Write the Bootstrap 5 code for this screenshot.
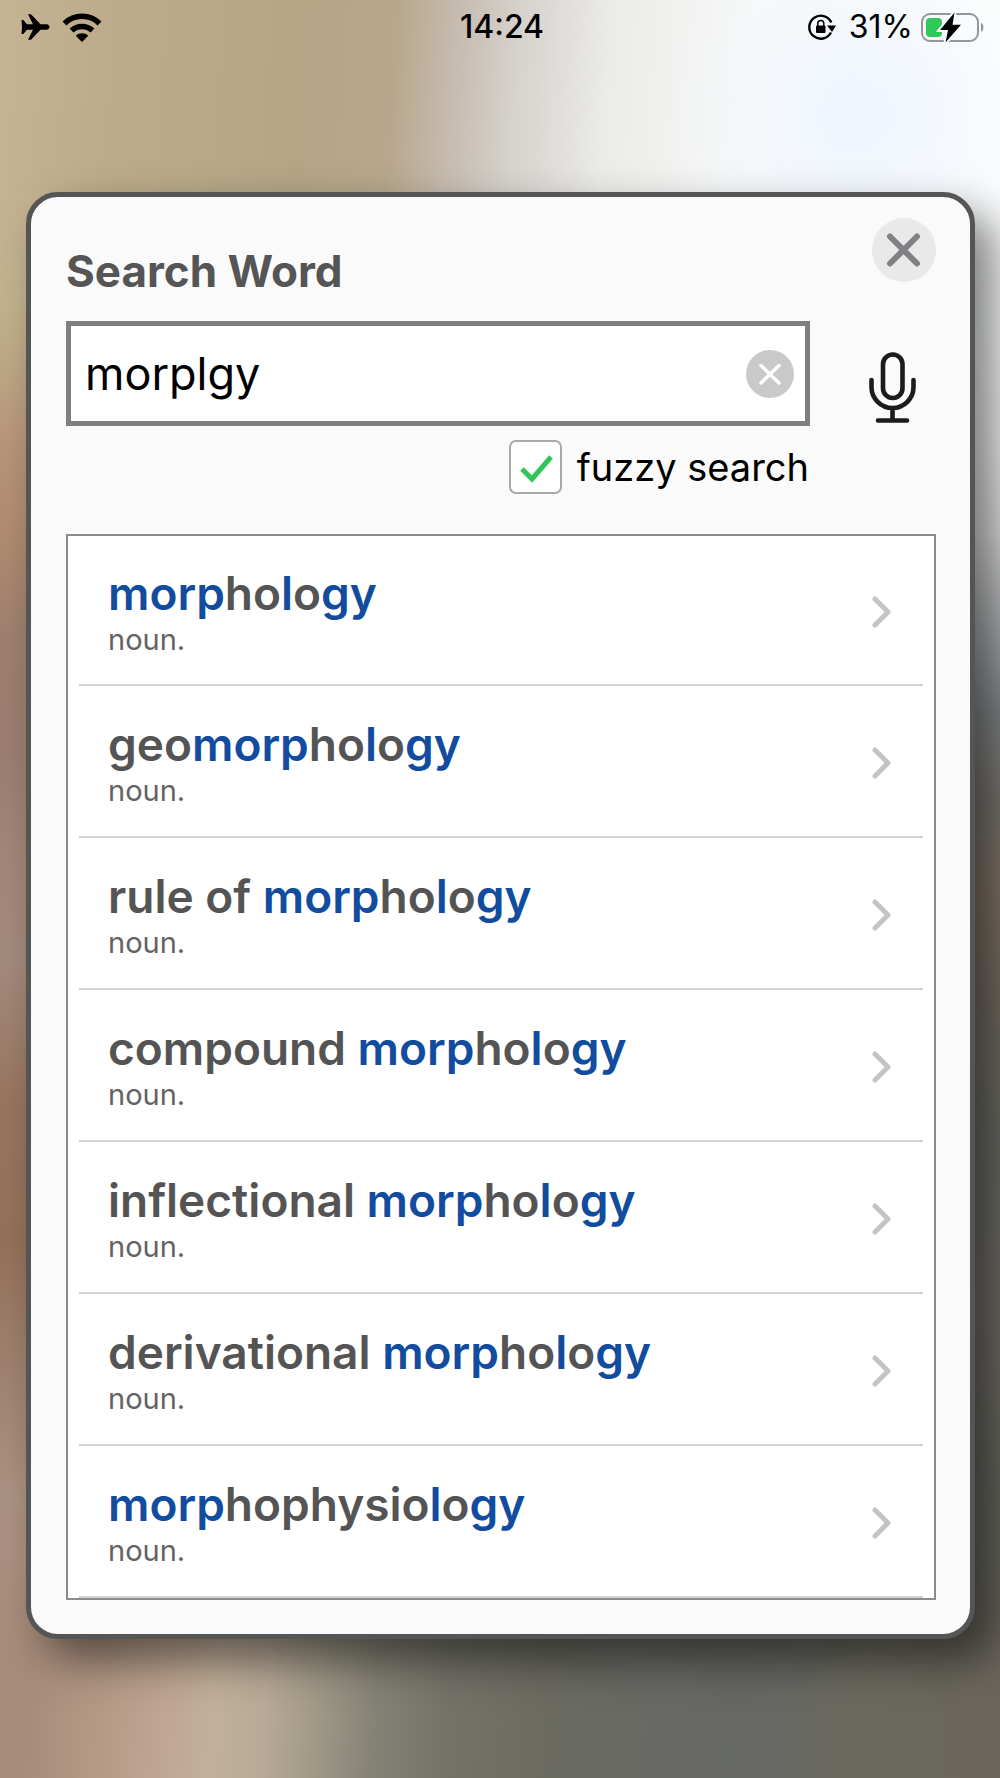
<!DOCTYPE html>
<html lang="en">
<head>
<meta charset="utf-8">
<meta name="viewport" content="width=device-width, initial-scale=1">
<title>Search Word</title>
<link rel="stylesheet" href="https://cdn.jsdelivr.net/npm/bootstrap@5.3.0/dist/css/bootstrap.min.css">
<style>
  body {
    font-family: Inter, "Liberation Sans", sans-serif;
    color: #000;
    position: relative;
    min-height: 100vh;
    isolation: isolate;
    /* left and right halves of the soft wallpaper */
    background:
      linear-gradient(180deg, #c4b393 0%, #c3b48f 17%, #bda685 21%, #b8957c 25%, #b08c70 30%, #9f8070 36%, #9c7e70 42%, #a38778 48%, #a58b7e 54%, #98765f 62%, #94725a 70%, #a08270 77%, #ac9282 84%, #ab9080 92%, #a38674 100%) 0 0 / 50% 100% no-repeat,
      linear-gradient(180deg, #fdfefe 0%, #fbfcfd 19%, #f6f6f6 25%, #e4e5e5 30%, #b4b6b8 35%, #888b8d 40%, #7c7872 45%, #82766a 50%, #766f64 56%, #6c6d66 64%, #726e68 74%, #66685f 84%, #6b6a60 92%, #6b645c 100%) 100% 0 / 50% 100% no-repeat;
  }
  body::before, body::after {
    content: "";
    position: absolute;
    left: 0;
    right: 0;
    z-index: -1;
  }
  body::before {
    top: 0;
    height: 320px;
    background:
      radial-gradient(circle at 86% 36%, #eff6ff 0, rgba(240, 247, 255, 0) 22%),
      linear-gradient(94deg, #c5b494 0%, #bcab8b 12%, #b5a486 30%, #b8a78c 39%, #c6bcb0 45%, #d6d2cd 51%, #ebebe9 60%, #f8f9f8 74%, #fdfefe 100%);
    -webkit-mask-image: linear-gradient(#000 60%, transparent);
    mask-image: linear-gradient(#000 60%, transparent);
  }
  body::after {
    bottom: 0;
    height: 220px;
    background: linear-gradient(94deg, #a88c7a 0%, #a88c7b 4%, #b39884 10%, #bfa592 17%, #c2b09a 22%, #b9aa97 27%, #a19a87 32%, #858276 38%, #74736a 45%, #6b6b62 55%, #666865 73%, #6a695f 86%, #6b655d 100%);
    -webkit-mask-image: linear-gradient(transparent, #000 36%);
    mask-image: linear-gradient(transparent, #000 36%);
  }
  svg { display: block; }

  .status-bar { height: 54px; padding: 0 16px 0 20px; font-size: 32px; line-height: 54px; }
  .status-side { flex: 1 1 0; }
  .status-time { font-weight: 500; }

  .search-panel {
    margin: 138px 25px 0 26px;
    padding: 21px 34px 34px 35px;
    border: 5px solid #555;
    border-radius: 32px;
    background: #fafafa;
    box-shadow: 20px 22px 44px rgba(0, 0, 0, .5);
  }
  .panel-head { height: 103px; }
  .panel-title { margin: 25px 0 0; font-size: 44px; line-height: 56px; font-weight: 700; color: #555; }
  .icon-btn { flex: none; padding: 0; border: 0; background: none; }

  .word-box { height: 105px; min-width: 0; border: 5px solid #7f7f7f; background: #fff; padding: 0 11px 0 14px; }
  .word-input { width: 0; border: 0; outline: 0; background: none; padding: 0; font-size: 45px; line-height: 56px; color: #000; }
  .mic-btn { margin: 28px 20px 0 59px; }

  .fuzzy-line { margin: 14px 127px 40px 0; gap: 15px; font-size: 38px; line-height: 54px; }
  .fuzzy-box {
    appearance: none;
    width: 53px;
    height: 54px;
    margin: 0;
    border: 2px solid #a9a9a9;
    border-radius: 7px;
    background: #fff;
  }
  .fuzzy-box:checked {
    background: #fff url("data:image/svg+xml,%3Csvg xmlns='http://www.w3.org/2000/svg' viewBox='0 0 49 50'%3E%3Cpath d='M11 27l10 10 19-22' fill='none' stroke='%2330c759' stroke-width='5'/%3E%3C/svg%3E") center / 100% no-repeat;
  }

  .result-list { border: 2px solid #8c8c8c; background: #fff; padding: 0 11px; }
  .result-item { height: 152px; padding: 4px 31px 0 29px; border-bottom: 2px solid #d3d3d3; color: #545454; text-decoration: none; }
  .result-list li:first-child .result-item { height: 150px; }
  .result-word { font-size: 46px; line-height: 56px; font-weight: 600; }
  .result-word b { font-weight: 600; color: #114c9e; }
  .result-kind { font-size: 29px; line-height: 38px; color: #636363; }
</style>
<script defer src="https://cdn.jsdelivr.net/npm/bootstrap@5.3.0/dist/js/bootstrap.bundle.min.js"></script>
</head>
<body>
<header class="status-bar d-flex align-items-center">
  <div class="status-side d-flex align-items-center">
    <svg width="30" height="28" viewBox="0 0 30 28" role="img" aria-label="Airplane mode"><path d="M1.500 7h1.800l3.700 4.200h6L8 1.300h3l9.500 9.900h6c4 .5 4 5.100 0 5.600h-6L11 26.700H8l5-9.900H7L3.300 21H1.500l.5-7z"/></svg>
    <svg class="ms-2" width="48" height="32" viewBox="0 0 48 32" role="img" aria-label="Wi-Fi"><g fill="none" stroke="#000" stroke-width="5.500"><path d="M6.500 12.500a25 25 0 0 1 35 0"/><path d="M13.500 19.600a15.500 15.500 0 0 1 21 0"/></g><path d="M24 31l-6.200-6.300c3.400-3.200 9-3.200 12.400 0z"/></svg>
  </div>
  <div class="status-time">14:24</div>
  <div class="status-side d-flex align-items-center justify-content-end">
    <svg width="30" height="28" viewBox="0 0 30 28" role="img" aria-label="Rotation lock"><path d="M24 19.500A11.500 11.500 0 1 1 24.300 9.500" fill="none" stroke="#000" stroke-width="2.400"/><path d="M20 12.500h9l-4 6.500z"/><rect x="9" y="12.500" width="9.500" height="7.500" rx="1"/><path d="M10.800 13v-2.500a3 3 0 0 1 6 0V13" fill="none" stroke="#000" stroke-width="1.500"/></svg>
    <span class="mx-2 ps-1">31%</span>
    <svg width="63" height="34" viewBox="0 0 63 34" role="img" aria-label="Battery charging"><rect x="1" y="4" width="56" height="27" rx="8" fill="none" stroke="#949698" stroke-width="2"/><path d="M60 12.500c3.200 2 3.200 7.500 0 9.500z" fill="#949698"/><rect x="5" y="8" width="16" height="19" rx="4" fill="#32c759"/><path d="M33.500 2.500L19 20h8l-2.500 12.500L40 14.800h-8.500z" stroke="#fafdff" stroke-width="4"/><path d="M33.500 2.500L19 20h8l-2.500 12.500L40 14.800h-8.500z"/></svg>
  </div>
</header>

<main class="search-panel">
  <div class="panel-head d-flex justify-content-between align-items-start">
    <h1 class="panel-title"><label for="word">Search Word</label></h1>
    <button type="button" class="icon-btn" aria-label="Close">
      <svg width="64" height="64" viewBox="0 0 64 64"><circle cx="32" cy="32" r="32" fill="#e9e9e9"/><path d="M18 18.500l27 27M45 18.500l-27 27" stroke="#808085" stroke-width="6" stroke-linecap="round"/></svg>
    </button>
  </div>

  <div class="d-flex align-items-start">
    <div class="word-box d-flex align-items-center flex-fill">
      <input id="word" class="word-input flex-fill" type="text" value="morplgy" autocomplete="off" spellcheck="false">
      <button type="button" class="icon-btn" aria-label="Clear text">
        <svg width="48" height="48" viewBox="0 0 48 48"><circle cx="24" cy="24" r="24" fill="#c9c9c9"/><path d="M15 15.500l18 17.500M33 15.500l-18 17.500" stroke="#fff" stroke-width="3.500" stroke-linecap="round"/></svg>
      </button>
    </div>
    <button type="button" class="icon-btn mic-btn" aria-label="Voice input">
      <svg width="47" height="75" viewBox="0 0 47 75" fill="none" stroke="#1c1c1e" stroke-width="4.600" stroke-linecap="round"><rect x="14" y="5.500" width="19.500" height="43.500" rx="9.750"/><path d="M2.500 31v7a21 21 0 0 0 42 0v-7M23.500 59v11M9 71.500h29"/></svg>
    </button>
  </div>

  <div class="fuzzy-line d-flex justify-content-end align-items-center">
    <input id="fuzzy" class="fuzzy-box" type="checkbox" checked>
    <label for="fuzzy">fuzzy search</label>
  </div>

  <ul class="result-list list-unstyled mb-0">
    <li><a href="#" class="result-item d-flex align-items-center justify-content-between"><span class="d-flex flex-column"><span class="result-word"><b>morp</b>ho<b>l</b>o<b>gy</b></span><span class="result-kind">noun.</span></span><svg width="20" height="34" viewBox="0 0 20 34" fill="none" stroke="#c4c4c6" stroke-width="5" stroke-linecap="round" stroke-linejoin="round"><path d="M3 4l13 13L3 30"/></svg></a></li>
    <li><a href="#" class="result-item d-flex align-items-center justify-content-between"><span class="d-flex flex-column"><span class="result-word">geo<b>morp</b>ho<b>l</b>o<b>gy</b></span><span class="result-kind">noun.</span></span><svg width="20" height="34" viewBox="0 0 20 34" fill="none" stroke="#c4c4c6" stroke-width="5" stroke-linecap="round" stroke-linejoin="round"><path d="M3 4l13 13L3 30"/></svg></a></li>
    <li><a href="#" class="result-item d-flex align-items-center justify-content-between"><span class="d-flex flex-column"><span class="result-word">rule of <b>morp</b>ho<b>l</b>o<b>gy</b></span><span class="result-kind">noun.</span></span><svg width="20" height="34" viewBox="0 0 20 34" fill="none" stroke="#c4c4c6" stroke-width="5" stroke-linecap="round" stroke-linejoin="round"><path d="M3 4l13 13L3 30"/></svg></a></li>
    <li><a href="#" class="result-item d-flex align-items-center justify-content-between"><span class="d-flex flex-column"><span class="result-word">compound <b>morp</b>ho<b>l</b>o<b>gy</b></span><span class="result-kind">noun.</span></span><svg width="20" height="34" viewBox="0 0 20 34" fill="none" stroke="#c4c4c6" stroke-width="5" stroke-linecap="round" stroke-linejoin="round"><path d="M3 4l13 13L3 30"/></svg></a></li>
    <li><a href="#" class="result-item d-flex align-items-center justify-content-between"><span class="d-flex flex-column"><span class="result-word">inflectional <b>morp</b>ho<b>l</b>o<b>gy</b></span><span class="result-kind">noun.</span></span><svg width="20" height="34" viewBox="0 0 20 34" fill="none" stroke="#c4c4c6" stroke-width="5" stroke-linecap="round" stroke-linejoin="round"><path d="M3 4l13 13L3 30"/></svg></a></li>
    <li><a href="#" class="result-item d-flex align-items-center justify-content-between"><span class="d-flex flex-column"><span class="result-word">derivational <b>morp</b>ho<b>l</b>o<b>gy</b></span><span class="result-kind">noun.</span></span><svg width="20" height="34" viewBox="0 0 20 34" fill="none" stroke="#c4c4c6" stroke-width="5" stroke-linecap="round" stroke-linejoin="round"><path d="M3 4l13 13L3 30"/></svg></a></li>
    <li><a href="#" class="result-item d-flex align-items-center justify-content-between"><span class="d-flex flex-column"><span class="result-word"><b>morp</b>hophysio<b>l</b>o<b>gy</b></span><span class="result-kind">noun.</span></span><svg width="20" height="34" viewBox="0 0 20 34" fill="none" stroke="#c4c4c6" stroke-width="5" stroke-linecap="round" stroke-linejoin="round"><path d="M3 4l13 13L3 30"/></svg></a></li>
  </ul>
</main>
</body>
</html>
